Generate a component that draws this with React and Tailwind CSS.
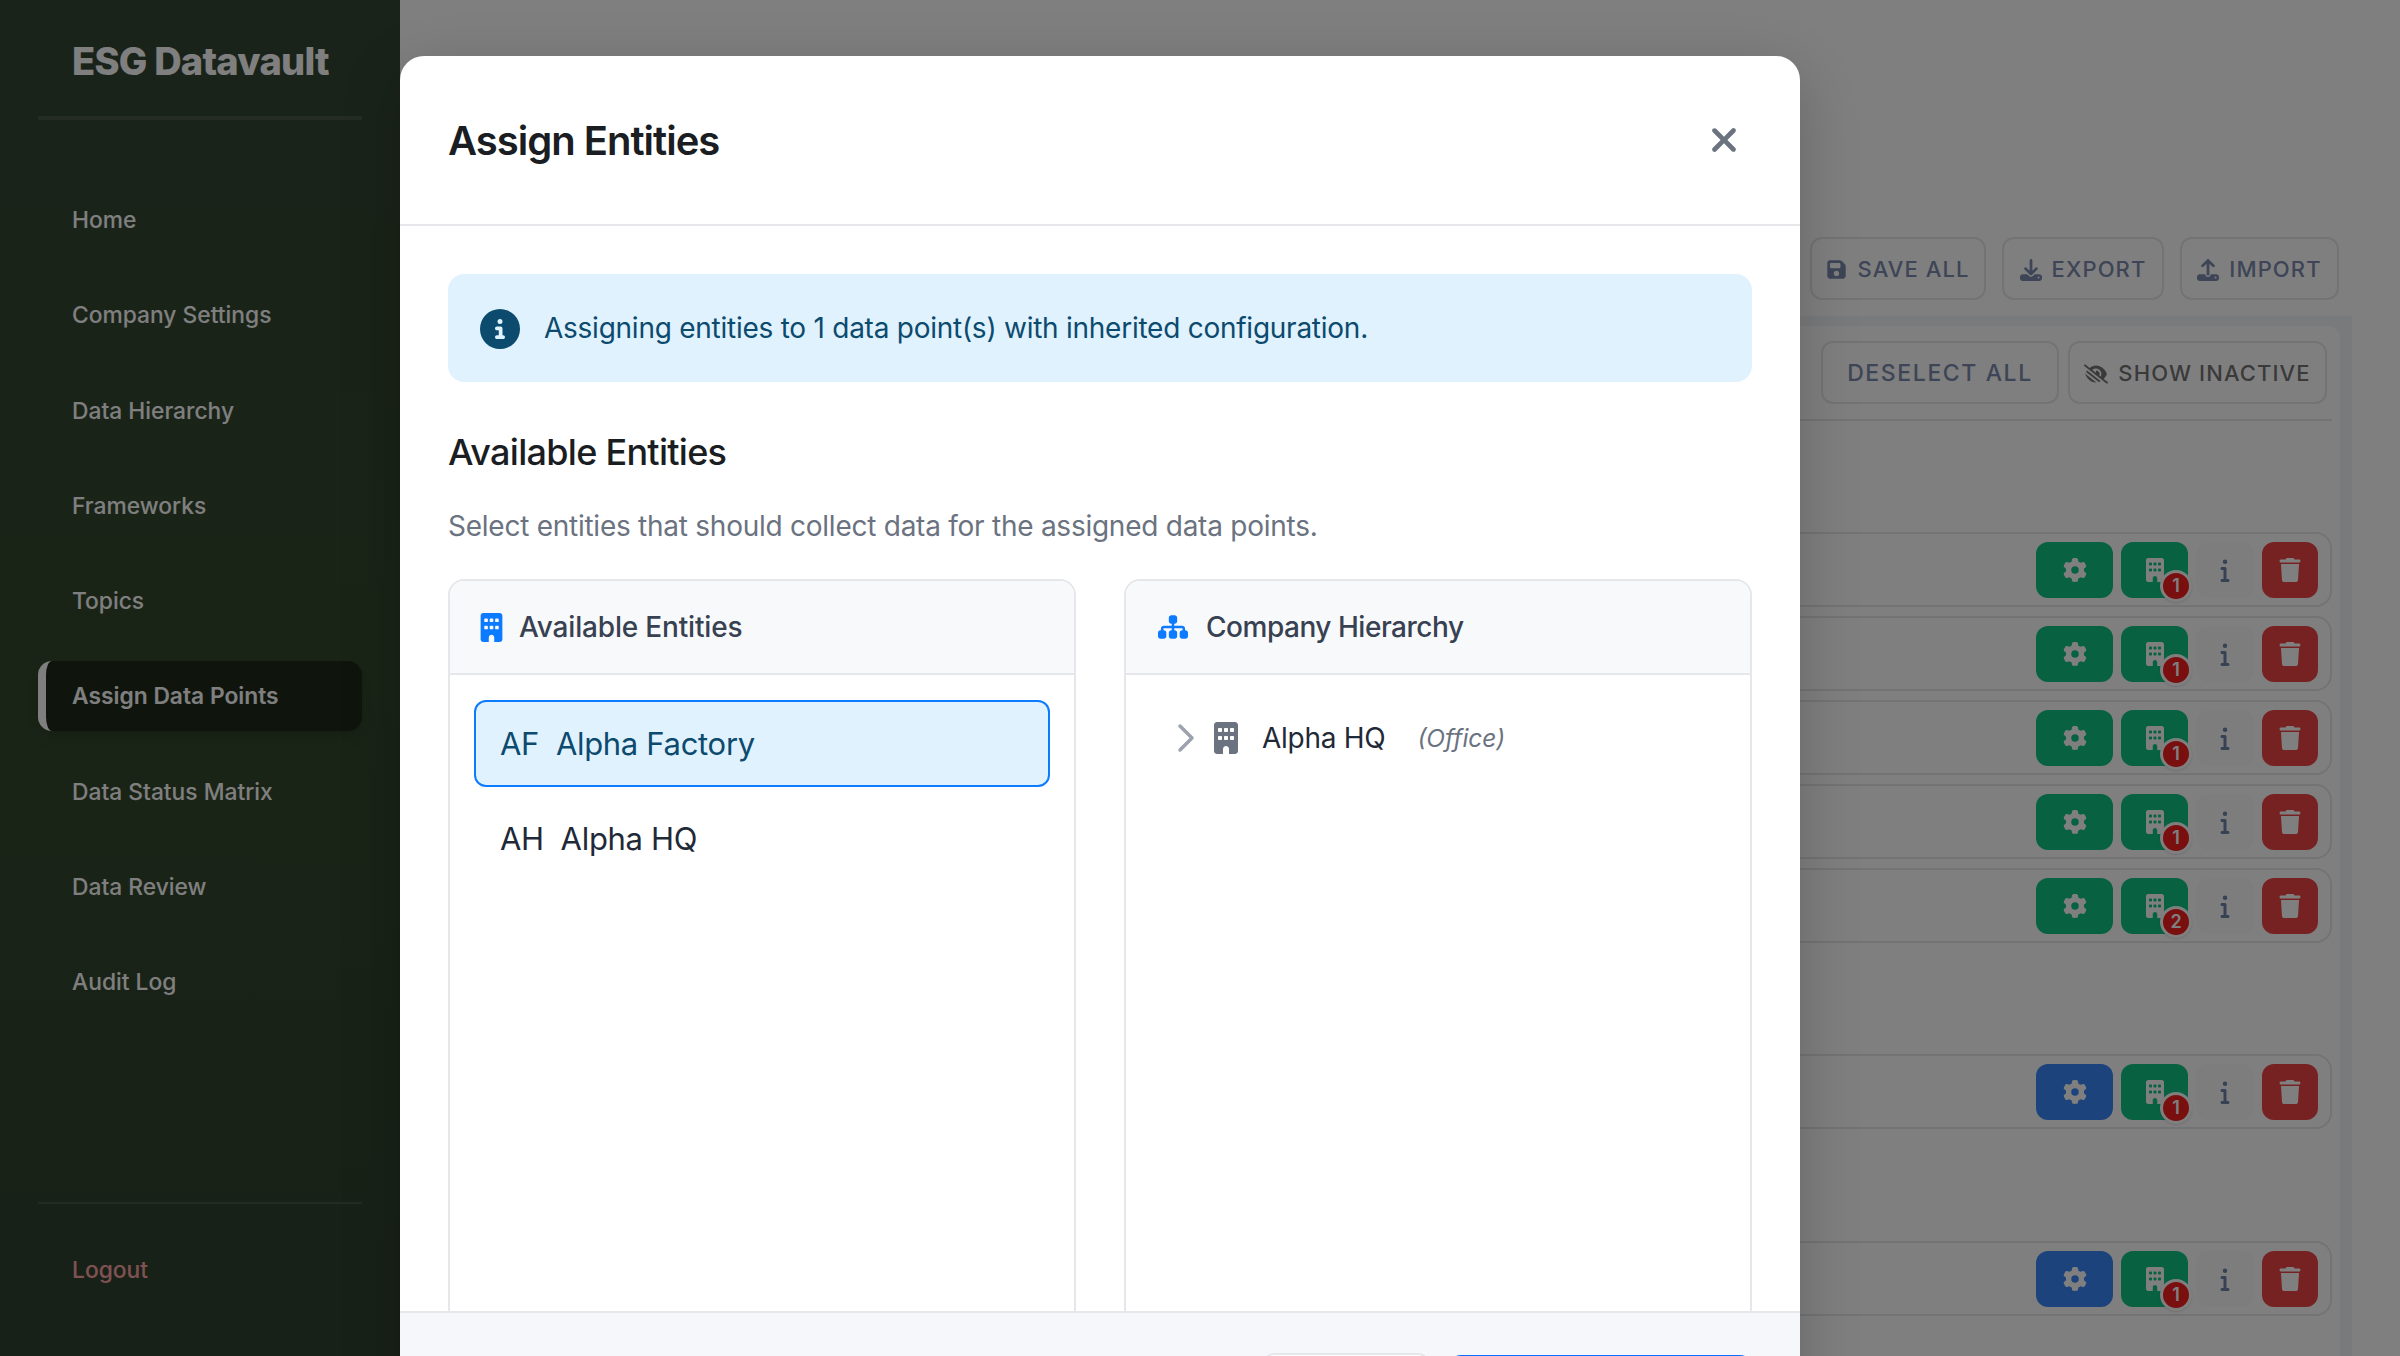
import {
  FaBuilding, FaCircleInfo, FaDownload, FaEyeLowVision, FaFloppyDisk,
  FaGear, FaInfo, FaSitemap, FaTrash, FaUpload, FaXmark,
} from 'react-icons/fa6'

const NAV = [
  'Home', 'Company Settings', 'Data Hierarchy', 'Frameworks', 'Topics',
  'Assign Data Points', 'Data Status Matrix', 'Data Review', 'Audit Log',
]

function Sidebar() {
  return (
    <aside className="w-[400px] shrink-0 h-full flex flex-col bg-gradient-to-b from-[#344634] via-[#34482c] to-[#304230] text-white">
      <div className="mx-[38px] h-[120px] border-b-[4px] border-white/10 pl-[34px] pt-[36px]">
        <h1 className="text-[38px] leading-[50px] font-extrabold tracking-[-0.02em]">ESG Datavault</h1>
      </div>
      <nav className="mt-[65px] flex flex-col gap-[25.3px] mx-[38px]">
        {NAV.map((label) => (
          label === 'Assign Data Points' ? (
            <a key={label} className="h-[70px] flex items-center rounded-[14px] border-l-[8px] border-white bg-black/40 pl-[26px] text-[22.8px] font-semibold shadow-lg">
              {label}
            </a>
          ) : (
            <a key={label} className="h-[70px] flex items-center pl-[34px] text-[22.8px] font-medium">
              {label}
            </a>
          )
        ))}
      </nav>
      <div className="mt-auto mx-[38px] border-t-2 border-white/10 h-[154px] pt-[31px] pl-[34px]">
        <a className="h-[70px] flex items-center text-[22.8px] font-medium text-[#fca5a5]">Logout</a>
      </div>
    </aside>
  )
}

function ToolButton({ icon, label, className = '' }) {
  return (
    <button className={`h-[63px] flex items-center justify-center gap-[10px] px-[10px] pt-[2px] rounded-[12px] border-2 border-[#e5e7eb] text-[22px] font-medium tracking-[0.05em] whitespace-nowrap ${className}`}>
      {icon}
      {label}
    </button>
  )
}

function RowActions({ gear, count }) {
  return (
    <div className="h-[75px] border-2 border-[#e5e7eb] rounded-[16px] flex items-center justify-end gap-[8px] pr-[12px]">
      <button className={`w-[77px] h-[56px] rounded-[12px] flex items-center justify-center text-white ${gear}`}>
        <FaGear size={24} />
      </button>
      <button className="relative w-[67px] h-[56px] rounded-[12px] bg-[#10c583] flex items-center justify-center text-white">
        <FaBuilding size={24} />
        <span className="absolute left-[39px] top-[28px] w-[32px] h-[32px] rounded-full bg-[#f31e1e] border-[3px] border-white shadow flex items-center justify-center text-[18px] font-semibold text-white">
          {count}
        </span>
      </button>
      <button className="w-[58px] h-[56px] rounded-[12px] bg-[#fbfbfc] flex items-center justify-center text-[#6f84a8]">
        <FaInfo size={24} />
      </button>
      <button className="w-[56px] h-[56px] rounded-[12px] bg-[#ef4444] flex items-center justify-center text-white">
        <FaTrash size={24} />
      </button>
    </div>
  )
}

function Main() {
  const green = 'bg-[#10c583]'
  const blue = 'bg-[#3b86f8]'
  return (
    <main className="flex-1 h-full bg-white pt-[237px] text-[#7a8aac]">
      <div className="flex justify-end gap-[16px] pr-[61px]">
        <ToolButton className="w-[176px]" icon={<FaFloppyDisk size={21} className="shrink-0" />} label="SAVE ALL" />
        <ToolButton className="w-[162px]" icon={<FaDownload size={22} className="shrink-0" />} label="EXPORT" />
        <ToolButton className="w-[159px]" icon={<FaUpload size={22} className="shrink-0" />} label="IMPORT" />
      </div>
      <div className="mt-[16px] mr-[48px] bg-[#f3f4f6] pt-[10px] pr-[12px] h-[1040px]">
        <div className="bg-white h-full rounded-t-[12px] pr-[8px]">
          <div className="h-[95px] border-b-2 border-[#e5e7eb] flex justify-end items-start gap-[9px] pt-[15px] pr-[5px]">
            <ToolButton className="w-[238px] text-[23px] tracking-[0.07em]" label="DESELECT ALL" />
            <ToolButton className="w-[259px] !text-[#757575]" icon={<FaEyeLowVision size={24} className="shrink-0" />} label="SHOW INACTIVE" />
          </div>
          <div className="mt-[111px] flex flex-col gap-[9px]">
            <RowActions gear={green} count={1} />
            <RowActions gear={green} count={1} />
            <RowActions gear={green} count={1} />
            <RowActions gear={green} count={1} />
            <RowActions gear={green} count={2} />
          </div>
          <div className="mt-[111px]"><RowActions gear={blue} count={1} /></div>
          <div className="mt-[112px]"><RowActions gear={blue} count={1} /></div>
        </div>
      </div>
    </main>
  )
}

function AssignModal() {
  return (
    <div className="w-[1400px] h-[1404px] bg-white rounded-[24px] shadow-[0_16px_60px_rgba(0,0,0,0.2)] flex flex-col overflow-hidden">
      <div className="h-[170px] shrink-0 border-b-2 border-[#e5e7eb] px-[48px] flex items-center justify-between">
        <h2 className="mt-[2px] text-[40px] leading-[48px] font-semibold text-[#1a1d21] tracking-[-0.025em]">Assign Entities</h2>
        <FaXmark size={38} className="text-[#6b7280] mr-[9px]" />
      </div>

      <div className="flex-1 min-h-0 overflow-hidden px-[48px] pt-[48px] flex flex-col">
        <div className="h-[108px] shrink-0 rounded-[16px] bg-[#e0f2fe] text-[#0c4a6e] flex items-center gap-[24px] px-[32px]">
          <FaCircleInfo size={40} className="mt-[2px]" />
          <span className="text-[28px] tracking-[-0.009em]">Assigning entities to 1 data point(s) with inherited configuration.</span>
        </div>

        <h3 className="mt-[46px] text-[36px] leading-[48px] font-medium text-[#1a1d21] tracking-[-0.02em]">Available Entities</h3>
        <p className="mt-[29px] text-[28px] leading-[42px] text-[#6b7280] tracking-[-0.009em]">
          Select entities that should collect data for the assigned data points.
        </p>

        <div className="mt-[32px] flex-1 grid grid-cols-2 gap-[48px]">
          <section className="border-2 border-[#e5e7eb] rounded-t-[16px] h-[900px] overflow-hidden">
            <div className="h-[94px] bg-[#f8f9fb] border-b-2 border-[#e5e7eb] flex items-center gap-[13px] pl-[27px] text-[28px] font-medium text-[#374151] tracking-[-0.006em]">
              <FaBuilding size={29} className="text-[#0d7bff]" />
              Available Entities
            </div>
            <div className="px-[24px] pt-[25px]">
              <div className="h-[87px] pt-[2px] rounded-[12px] border-2 border-[#0d7bff] bg-[#e0f2fe] text-[#0c4a6e] flex items-center pl-[24px] text-[31px] tracking-[-0.01em]">
                AF&nbsp;&nbsp;Alpha Factory
              </div>
              <div className="mt-[8px] h-[87px] pt-[2px] flex items-center pl-[26px] text-[31px] text-[#1f2937] tracking-[-0.01em]">
                AH&nbsp;&nbsp;Alpha HQ
              </div>
            </div>
          </section>

          <section className="border-2 border-[#e5e7eb] rounded-t-[16px] h-[900px] overflow-hidden">
            <div className="h-[94px] bg-[#f8f9fb] border-b-2 border-[#e5e7eb] flex items-center gap-[18px] pl-[32px] text-[28px] font-medium text-[#374151] tracking-[-0.017em]">
              <FaSitemap size={30} className="text-[#0d7bff]" />
              Company Hierarchy
            </div>
            <div className="pt-[39px] pl-[51px] h-[87px] flex items-center">
              <svg width="18" height="30" viewBox="0 0 18 30" fill="none" stroke="#9ca3af" strokeWidth="3.5" strokeLinecap="round" strokeLinejoin="round">
                <path d="M3 3l12 12L3 27" />
              </svg>
              <FaBuilding size={32} className="ml-[15px] text-[#6b7280]" />
              <span className="ml-[20px] text-[28px] text-[#1f2937] tracking-[-0.01em]">Alpha HQ</span>
              <span className="ml-[32px] text-[24.5px] italic text-[#6b7280]">(Office)</span>
            </div>
          </section>
        </div>
      </div>

      <div className="h-[149px] shrink-0 border-t-2 border-[#e5e7eb] bg-[#f6f7fb] flex justify-end items-start gap-[19px] pt-[40px] pr-[48px]">
        <button className="w-[168px] h-[64px] rounded-[12px] border-2 border-[#e5e7eb] bg-white" />
        <button className="mt-[2px] w-[303px] h-[64px] rounded-[12px] bg-[#0d6efd]" />
      </div>
    </div>
  )
}

export default function App() {
  return (
    <div className="relative w-[2400px] h-[1356px] overflow-hidden flex font-['Inter',sans-serif]">
      <Sidebar />
      <Main />
      <div className="absolute inset-0 bg-black/50 pt-[56px] pl-[400px]">
        <AssignModal />
      </div>
    </div>
  )
}
